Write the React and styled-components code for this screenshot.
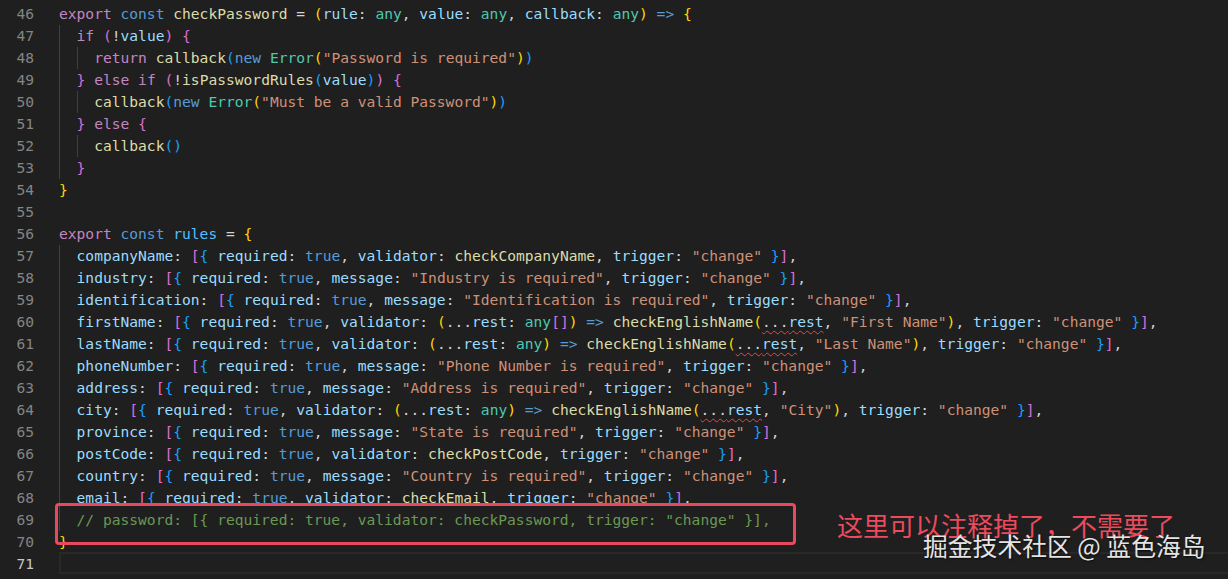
import React from "react";
import styled, { createGlobalStyle } from "styled-components";

const Global = createGlobalStyle`
  html, body { margin: 0; padding: 0; background: #1f1f1f; }
  body { width: 1228px; height: 579px; overflow: hidden; }
`;

const COLORS = {
  k: "#c586c0",
  s: "#569cd6",
  f: "#dcdcaa",
  v: "#9cdcfe",
  c: "#4fc1ff",
  t: "#4ec9b0",
  str: "#ce9178",
  cm: "#6a9955",
  p: "#d4d4d4",
  b1: "#ffd700",
  b2: "#da70d6",
  b3: "#179fff",
};

const Editor = styled.div`
  position: relative;
  width: 1228px;
  height: 579px;
  padding-top: 3px;
  box-sizing: border-box;
  background: #1f1f1f;
  font-family: "DejaVu Sans Mono", "Liberation Mono", monospace;
  font-size: 14.6px;
  color: #d4d4d4;
`;

const Row = styled.div`
  display: flex;
  height: 22px;
  line-height: 22px;
`;

const LineNo = styled.div`
  width: 34px;
  flex: none;
  text-align: right;
  color: ${(p) => (p.$active ? "#c6c6c6" : "#858585")};
`;

const Code = styled.div`
  flex: 1;
  margin-left: 25px;
  white-space: pre;
  box-sizing: border-box;
  ${(p) =>
    p.$active
      ? `border-top: 2px solid #282828; border-bottom: 2px solid #282828; border-left: 2px solid #282828; margin-top: -1px; height: 22px; line-height: 18px;`
      : ""}
`;

const Guide = styled.span`
  display: inline-block;
  width: 2ch;
  height: 22px;
  vertical-align: top;
  box-shadow: inset 1px 0 0 #404040;
`;

const Tok = styled.span`
  color: ${(p) => COLORS[p.$c] || COLORS.p};
`;

const Squiggle = styled.span`
  text-decoration: underline wavy #e04a4a;
  text-decoration-thickness: 1px;
  text-underline-offset: 3px;
`;

const Highlight = styled.div`
  position: absolute;
  left: 55px;
  top: 503px;
  width: 741px;
  height: 42px;
  box-sizing: border-box;
  border: 3px solid #e9495e;
  border-radius: 4px;
`;

const Note = styled.div`
  position: absolute;
  left: 837px;
  top: 510px;
  font-family: "Noto Sans CJK SC", "Noto Sans", sans-serif;
  font-size: 26px;
  line-height: 30px;
  color: #ec4a5d;
  white-space: nowrap;
`;

const Watermark = styled.div`
  position: absolute;
  left: 923px;
  top: 530px;
  font-family: "Noto Sans CJK SC", "Noto Sans", sans-serif;
  font-size: 24.8px;
  line-height: 30px;
  color: #e4e4e4;
  text-shadow: 1px 1px 2px rgba(0, 0, 0, 0.7);
  white-space: nowrap;
`;

const T = (c, text) => ({ c, text });
const SQ = (text) => ({ sq: true, text });

const ruleLine = (name, mid) => [
  T("v", name), ": ", T("b2", "["), T("b3", "{"), " ",
  T("v", "required"), ": ", T("s", "true"), ", ",
  ...mid, ", ",
  T("v", "trigger"), ": ", T("str", '"change"'), " ",
  T("b3", "}"), T("b2", "]"), ",",
];

const msg = (m) => [T("v", "message"), ": ", T("str", `"${m}"`)];
const vfn = (f) => [T("v", "validator"), ": ", T("f", f)];
const arrow = (arr, label) => [
  T("v", "validator"), ": ", T("b1", "("), "...", T("v", "rest"), ": ",
  T("t", "any"), ...(arr ? [T("b2", "[]")] : []), T("b1", ")"), " ",
  T("s", "=>"), " ", T("f", "checkEnglishName"), T("b1", "("),
  SQ("..."), ", ", T("str", `"${label}"`), T("b1", ")"),
];

const LINES = [
  { n: 46, i: 0, t: [T("k", "export"), " ", T("s", "const"), " ", T("f", "checkPassword"), " = ", T("b1", "("), T("v", "rule"), ": ", T("t", "any"), ", ", T("v", "value"), ": ", T("t", "any"), ", ", T("v", "callback"), ": ", T("t", "any"), T("b1", ")"), " ", T("s", "=>"), " ", T("b1", "{")] },
  { n: 47, i: 1, t: [T("k", "if"), " ", T("b2", "("), "!", T("v", "value"), T("b2", ")"), " ", T("b2", "{")] },
  { n: 48, i: 2, t: [T("k", "return"), " ", T("f", "callback"), T("b3", "("), T("s", "new"), " ", T("t", "Error"), T("b1", "("), T("str", '"Password is required"'), T("b1", ")"), T("b3", ")")] },
  { n: 49, i: 1, t: [T("b2", "}"), " ", T("k", "else"), " ", T("k", "if"), " ", T("b2", "("), "!", T("f", "isPasswordRules"), T("b3", "("), T("v", "value"), T("b3", ")"), T("b2", ")"), " ", T("b2", "{")] },
  { n: 50, i: 2, t: [T("f", "callback"), T("b3", "("), T("s", "new"), " ", T("t", "Error"), T("b1", "("), T("str", '"Must be a valid Password"'), T("b1", ")"), T("b3", ")")] },
  { n: 51, i: 1, t: [T("b2", "}"), " ", T("k", "else"), " ", T("b2", "{")] },
  { n: 52, i: 2, t: [T("f", "callback"), T("b3", "()")] },
  { n: 53, i: 1, t: [T("b2", "}")] },
  { n: 54, i: 0, t: [T("b1", "}")] },
  { n: 55, i: 0, t: [] },
  { n: 56, i: 0, t: [T("k", "export"), " ", T("s", "const"), " ", T("c", "rules"), " = ", T("b1", "{")] },
  { n: 57, i: 1, t: ruleLine("companyName", vfn("checkCompanyName")) },
  { n: 58, i: 1, t: ruleLine("industry", msg("Industry is required")) },
  { n: 59, i: 1, t: ruleLine("identification", msg("Identification is required")) },
  { n: 60, i: 1, t: ruleLine("firstName", arrow(true, "First Name")) },
  { n: 61, i: 1, t: ruleLine("lastName", arrow(false, "Last Name")) },
  { n: 62, i: 1, t: ruleLine("phoneNumber", msg("Phone Number is required")) },
  { n: 63, i: 1, t: ruleLine("address", msg("Address is required")) },
  { n: 64, i: 1, t: ruleLine("city", arrow(false, "City")) },
  { n: 65, i: 1, t: ruleLine("province", msg("State is required")) },
  { n: 66, i: 1, t: ruleLine("postCode", vfn("checkPostCode")) },
  { n: 67, i: 1, t: ruleLine("country", msg("Country is required")) },
  { n: 68, i: 1, t: ruleLine("email", vfn("checkEmail")) },
  { n: 69, i: 1, t: [T("cm", '// password: [{ required: true, validator: checkPassword, trigger: "change" }],')] },
  { n: 70, i: 0, t: [T("b1", "}")] },
  { n: 71, i: 0, t: [], active: true },
];

function renderTok(tok, idx) {
  if (typeof tok === "string") return <Tok key={idx} $c="p">{tok}</Tok>;
  if (tok.sq)
    return (
      <Squiggle key={idx}>
        <Tok $c="p">...</Tok>
        <Tok $c="v">rest</Tok>
      </Squiggle>
    );
  return <Tok key={idx} $c={tok.c}>{tok.text}</Tok>;
}

export default function App() {
  return (
    <>
      <Global />
      <Editor>
        {LINES.map((l) => (
          <Row key={l.n}>
            <LineNo $active={l.active}>{l.n}</LineNo>
            <Code $active={l.active}>
              {Array.from({ length: l.i }).map((_, g) => (
                <Guide key={g} />
              ))}
              {l.t.map(renderTok)}
            </Code>
          </Row>
        ))}
        <Highlight />
        <Note>这里可以注释掉了，不需要了</Note>
        <Watermark>掘金技术社区 @ 蓝色海岛</Watermark>
      </Editor>
    </>
  );
}
